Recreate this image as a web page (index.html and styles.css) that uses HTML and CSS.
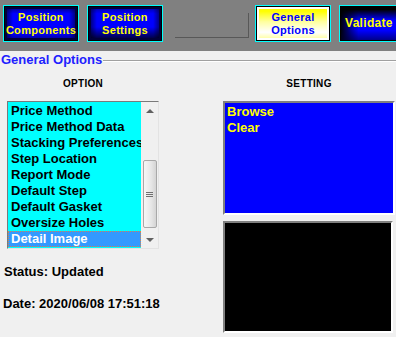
FILE: index.html
```html
<!DOCTYPE html>
<html lang="en">
<head>
    <meta charset="UTF-8">
    <meta name="viewport" content="width=device-width, initial-scale=1.0">
    <title>General Options</title>
    <link rel="stylesheet" href="styles.css">
</head>
<body>
    <div class="toolbar">
        <button class="tool tool-blue">Position<br>Components</button>
        <button class="tool tool-blue tool-next">Position<br>Settings</button>
        <div class="slot"></div>
        <button class="tool tool-active">General<br>Options</button>
        <button class="tool tool-dark">Validate</button>
    </div>

    <div class="group">
        <div class="legend">
            <span class="legend-text">General Options</span>
            <div class="legend-line"></div>
        </div>

        <div class="columns">
            <div class="col-left">
                <div class="col-title">OPTION</div>
                <div class="listbox">
                    <ul class="items">
                        <li>Price Method</li>
                        <li>Price Method Data</li>
                        <li>Stacking Preferences</li>
                        <li>Step Location</li>
                        <li>Report Mode</li>
                        <li>Default Step</li>
                        <li>Default Gasket</li>
                        <li>Oversize Holes</li>
                        <li class="selected">Detail Image</li>
                    </ul>
                    <div class="scrollbar">
                        <div class="arrow-btn"><span class="arrow-up"></span></div>
                        <div class="thumb">
                            <span class="grip"></span>
                            <span class="grip"></span>
                            <span class="grip"></span>
                        </div>
                        <div class="arrow-btn arrow-bottom"><span class="arrow-down"></span></div>
                    </div>
                </div>
                <p class="status">Status: Updated</p>
                <p class="status date">Date: 2020/06/08 17:51:18</p>
            </div>

            <div class="col-right">
                <div class="col-title">SETTING</div>
                <div class="setting-box">
                    <div class="setting-item">Browse</div>
                    <div class="setting-item">Clear</div>
                </div>
                <div class="preview-box"></div>
            </div>
        </div>
    </div>
</body>
</html>
```

FILE: styles.css
```css
* {
    box-sizing: border-box;
}

body {
    margin: 0;
    font-family: "Liberation Sans", Arial, sans-serif;
    background-color: #f0f0f0;
    color: #000000;
    overflow: hidden;
}

/* top bar */

.toolbar {
    display: flex;
    align-items: flex-start;
    height: 51px;
    padding: 5px 0 0 3px;
    background-color: #808080;
    overflow: hidden;
}

.tool {
    flex: none;
    width: 76px;
    height: 37px;
    padding: 0;
    border: 1px solid #00ffff;
    font-family: inherit;
    font-size: 11px;
    font-weight: bold;
    line-height: 13px;
    letter-spacing: 0.3px;
    color: #ffff00;
    text-align: center;
}

.tool-blue {
    box-shadow: inset 0 0 0 1px #000000, inset 0 0 0 3px #00003a;
    background:
        linear-gradient(to bottom, rgba(0, 0, 40, 0.7), rgba(0, 0, 0, 0) 22%, rgba(0, 0, 0, 0) 78%, rgba(0, 0, 30, 0.6)),
        linear-gradient(to right, #00004a, #0000ff 12%, #0000ff 88%, #00004a);
}

.tool-next {
    margin-left: 8px;
    background:
        linear-gradient(to bottom, rgba(0, 0, 40, 0.5), rgba(0, 0, 0, 0) 22%, rgba(0, 0, 0, 0) 60%, rgba(0, 0, 0, 0.9)),
        linear-gradient(to right, #00004a, #0000ff 12%, #0000ff 88%, #00004a);
}

.slot {
    flex: none;
    width: 74px;
    height: 25px;
    margin: 8px 0 0 12px;
    border-right: 1px solid #585858;
    border-bottom: 1px solid #585858;
}

.tool-active {
    margin-left: 6px;
    color: #0000ff;
    box-shadow: inset 0 0 0 1px #000000, inset 0 0 0 3px #ffffff;
    background: linear-gradient(to bottom, #ffff00 15%, #ffffa0 45%, #ffffff 75%, #ffff80);
}

.tool-dark {
    margin-left: 8px;
    padding-left: 5px;
    font-size: 12px;
    text-align: left;
    box-shadow: inset 0 0 0 1px #000000;
    background:
        linear-gradient(to bottom, #000000 10%, rgba(0, 0, 0, 0) 40%, rgba(0, 0, 0, 0) 70%, rgba(0, 0, 40, 0.6)),
        linear-gradient(to right, #000000, #0000ff 25%, #0000ff);
}

/* group */

.legend {
    display: flex;
    align-items: center;
    height: 17px;
}

.legend-text {
    padding-left: 1px;
    font-size: 13px;
    font-weight: bold;
    color: #2020ff;
    line-height: 17px;
}

.legend-line {
    flex: 1;
    height: 2px;
    margin: 2px 0 0 1px;
    border-top: 1px solid #a0a0a0;
    border-bottom: 1px solid #ffffff;
}

.columns {
    display: flex;
    padding: 8px 0 0 7px;
}

.col-left {
    width: 152px;
}

.col-right {
    width: 172px;
    margin-left: 64px;
}

.col-title {
    height: 16px;
    margin-bottom: 9px;
    font-size: 10px;
    font-weight: bold;
    letter-spacing: 0.3px;
    line-height: 16px;
    text-align: center;
}

/* list */

.listbox {
    display: flex;
    height: 148px;
    border: 1px solid;
    border-color: #7a7a7a #e3e3e3 #e3e3e3 #7a7a7a;
    background-color: #00ffff;
}

.items {
    flex: 1;
    margin: 0;
    padding: 1px 0 0;
    list-style: none;
    overflow: hidden;
}

.items li {
    height: 16px;
    padding-left: 3px;
    font-size: 13px;
    font-weight: bold;
    line-height: 16px;
    white-space: nowrap;
    overflow: hidden;
}

.items .selected {
    padding-left: 2px;
    border: 1px dotted #d08850;
    background-color: #3399ff;
    color: #ffffff;
    line-height: 14px;
}

.scrollbar {
    display: flex;
    flex-direction: column;
    align-items: center;
    width: 17px;
    background-color: #f0f0f0;
}

.arrow-btn {
    display: flex;
    align-items: center;
    justify-content: center;
    width: 17px;
    height: 17px;
}

.arrow-bottom {
    margin-top: auto;
}

.arrow-up {
    border-left: 4px solid transparent;
    border-right: 4px solid transparent;
    border-bottom: 4px solid #606060;
}

.arrow-down {
    border-left: 4px solid transparent;
    border-right: 4px solid transparent;
    border-top: 4px solid #606060;
}

.thumb {
    display: flex;
    flex-direction: column;
    align-items: center;
    justify-content: center;
    gap: 1px;
    width: 14px;
    height: 68px;
    margin-top: 41px;
    border: 1px solid #a8a8a8;
    border-radius: 2px;
    background: linear-gradient(to right, #f6f6f6, #e6e6e6 60%, #d4d4d4);
}

.grip {
    width: 7px;
    height: 1px;
    border-bottom: 1px solid #707070;
}

.status {
    margin: 15px 0 0 -3px;
    font-size: 13px;
    font-weight: bold;
    line-height: 16px;
    white-space: nowrap;
}

.date {
    margin: 16px 0 0 -4px;
}

/* setting */

.setting-box {
    height: 114px;
    padding: 1px 2px;
    border: 2px solid;
    border-color: #808080 #ffffff #ffffff #808080;
    background-color: #0000ff;
}

.setting-item {
    font-size: 13px;
    font-weight: bold;
    line-height: 16px;
    color: #ffff00;
}

.preview-box {
    width: 170px;
    height: 112px;
    margin-top: 6px;
    border: 2px solid;
    border-color: #808080 #ffffff #ffffff #808080;
    background-color: #000000;
}
```
